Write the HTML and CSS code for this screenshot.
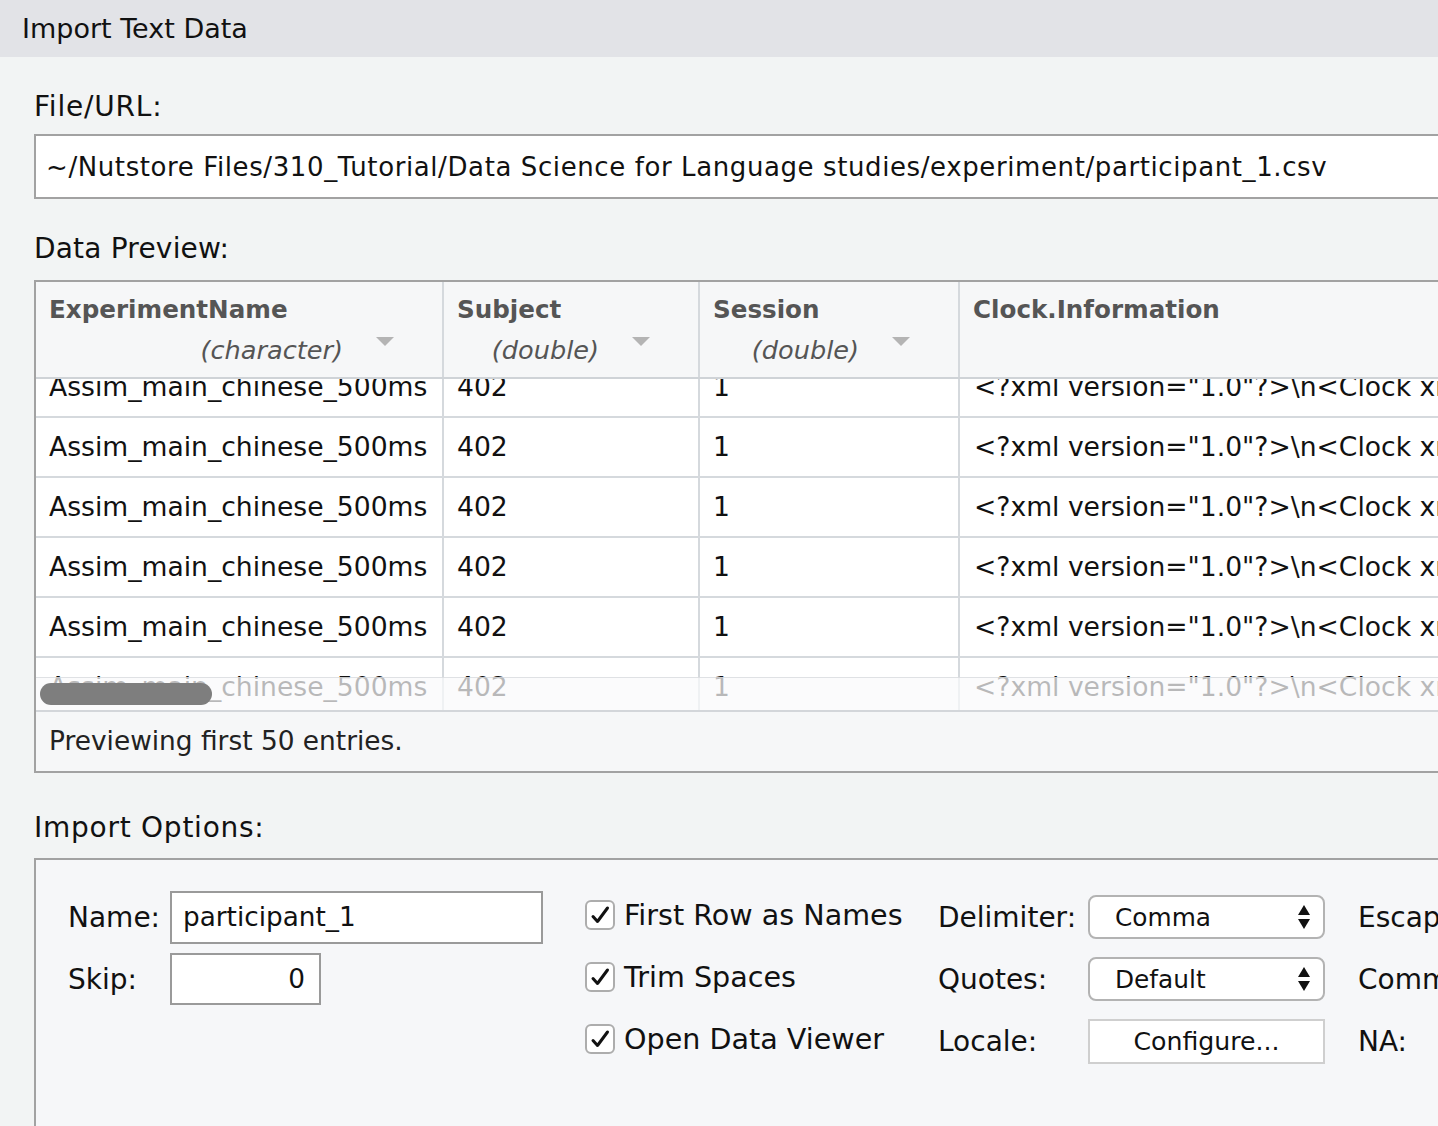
FILE: index.html
```html
<!DOCTYPE html>
<html>
<head>
<meta charset="utf-8">
<title>Import Text Data</title>
<link rel="stylesheet" href="styles.css">
</head>
<body>
<div class="page">
  <div class="titlebar">Import Text Data</div>
  <div class="content">
    <div class="section-label label-file">File/URL:</div>
    <div class="url-box">~/Nutstore Files/310_Tutorial/Data Science for Language studies/experiment/participant_1.csv</div>

    <div class="section-label label-preview">Data Preview:</div>
    <div class="preview">
      <div class="grid-head">
        <div class="hcell">
          <div class="hname">ExperimentName</div>
          <div class="htype"><span>(character)</span><svg class="tri" width="18" height="10" viewBox="0 0 18 10"><polygon points="0,0 18,0 9,9" fill="#b4b4b4"/></svg></div>
        </div>
        <div class="hcell">
          <div class="hname">Subject</div>
          <div class="htype"><span>(double)</span><svg class="tri" width="18" height="10" viewBox="0 0 18 10"><polygon points="0,0 18,0 9,9" fill="#b4b4b4"/></svg></div>
        </div>
        <div class="hcell">
          <div class="hname">Session</div>
          <div class="htype"><span>(double)</span><svg class="tri" width="18" height="10" viewBox="0 0 18 10"><polygon points="0,0 18,0 9,9" fill="#b4b4b4"/></svg></div>
        </div>
        <div class="hcell last">
          <div class="hname">Clock.Information</div>
        </div>
      </div>
      <div class="grid-body">
        <div class="rows">
          <div class="row"><div class="cell">Assim_main_chinese_500ms</div><div class="cell">402</div><div class="cell">1</div><div class="cell last">&lt;?xml version="1.0"?&gt;\n&lt;Clock xmlns:dt="urn:schemas-microsoft-com:datatypes"&gt;</div></div>
          <div class="row"><div class="cell">Assim_main_chinese_500ms</div><div class="cell">402</div><div class="cell">1</div><div class="cell last">&lt;?xml version="1.0"?&gt;\n&lt;Clock xmlns:dt="urn:schemas-microsoft-com:datatypes"&gt;</div></div>
          <div class="row"><div class="cell">Assim_main_chinese_500ms</div><div class="cell">402</div><div class="cell">1</div><div class="cell last">&lt;?xml version="1.0"?&gt;\n&lt;Clock xmlns:dt="urn:schemas-microsoft-com:datatypes"&gt;</div></div>
          <div class="row"><div class="cell">Assim_main_chinese_500ms</div><div class="cell">402</div><div class="cell">1</div><div class="cell last">&lt;?xml version="1.0"?&gt;\n&lt;Clock xmlns:dt="urn:schemas-microsoft-com:datatypes"&gt;</div></div>
          <div class="row"><div class="cell">Assim_main_chinese_500ms</div><div class="cell">402</div><div class="cell">1</div><div class="cell last">&lt;?xml version="1.0"?&gt;\n&lt;Clock xmlns:dt="urn:schemas-microsoft-com:datatypes"&gt;</div></div>
          <div class="row"><div class="cell">Assim_main_chinese_500ms</div><div class="cell">402</div><div class="cell">1</div><div class="cell last">&lt;?xml version="1.0"?&gt;\n&lt;Clock xmlns:dt="urn:schemas-microsoft-com:datatypes"&gt;</div></div>
        </div>
        <div class="hscroll"><div class="thumb"></div></div>
      </div>
      <div class="preview-foot">Previewing first 50 entries.</div>
    </div>

    <div class="section-label label-options">Import Options:</div>
    <div class="options">
      <div class="opt-grid">
        <div class="olabel">Name:</div>
        <div class="field"><div class="textbox name-box">participant_1</div></div>
        <div class="check-item"><span class="checkbox"><svg width="26" height="26" viewBox="0 0 26 26"><path d="M6 14.5 L10.5 19.5 L20.5 6" fill="none" stroke="#111" stroke-width="3" stroke-linecap="round" stroke-linejoin="round"/></svg></span><span class="check-text">First Row as Names</span></div>
        <div class="olabel">Delimiter:</div>
        <div class="field"><div class="select"><span>Comma</span><svg width="14" height="28" viewBox="0 0 14 28"><polygon points="1,12 7,2 13,12" fill="#111"/><polygon points="1,16 13,16 7,26" fill="#111"/></svg></div></div>
        <div class="olabel">Escape:</div>

        <div class="olabel">Skip:</div>
        <div class="field"><div class="textbox skip-box">0</div></div>
        <div class="check-item"><span class="checkbox"><svg width="26" height="26" viewBox="0 0 26 26"><path d="M6 14.5 L10.5 19.5 L20.5 6" fill="none" stroke="#111" stroke-width="3" stroke-linecap="round" stroke-linejoin="round"/></svg></span><span class="check-text">Trim Spaces</span></div>
        <div class="olabel">Quotes:</div>
        <div class="field"><div class="select"><span>Default</span><svg width="14" height="28" viewBox="0 0 14 28"><polygon points="1,12 7,2 13,12" fill="#111"/><polygon points="1,16 13,16 7,26" fill="#111"/></svg></div></div>
        <div class="olabel">Comment:</div>

        <div class="olabel"></div>
        <div class="field"></div>
        <div class="check-item"><span class="checkbox"><svg width="26" height="26" viewBox="0 0 26 26"><path d="M6 14.5 L10.5 19.5 L20.5 6" fill="none" stroke="#111" stroke-width="3" stroke-linecap="round" stroke-linejoin="round"/></svg></span><span class="check-text">Open Data Viewer</span></div>
        <div class="olabel">Locale:</div>
        <div class="field"><div class="button">Configure...</div></div>
        <div class="olabel">NA:</div>
      </div>
    </div>
  </div>
</div>
</body>
</html>
```

FILE: styles.css
```css
html, body {
  margin: 0;
  padding: 0;
}
body {
  width: 1438px;
  height: 1126px;
  overflow: hidden;
  background: #f2f4f4;
  font-family: "DejaVu Sans", "Liberation Sans", sans-serif;
  color: #111;
}
.page {
  width: 1438px;
  height: 1126px;
  overflow: hidden;
}
.titlebar {
  height: 57px;
  line-height: 58px;
  background: #e2e3e7;
  padding-left: 22px;
  font-size: 27px;
  color: #111;
  white-space: nowrap;
}
.content {
  padding-left: 34px;
  width: 1600px;
}
.section-label {
  font-size: 28px;
  line-height: 34px;
  height: 34px;
  white-space: nowrap;
}
.label-file { margin-top: 33px; letter-spacing: 0.8px; }
.url-box {
  margin-top: 10px;
  height: 61px;
  line-height: 63px;
  border: 2px solid #a2a2a2;
  background: #fff;
  padding-left: 10px;
  font-size: 26px;
  letter-spacing: 0.6px;
  white-space: nowrap;
  overflow: hidden;
}
.label-preview { margin-top: 33px; letter-spacing: 0.2px; }
.preview {
  margin-top: 14px;
  border: 2px solid #a2a2a2;
  background: #fff;
  width: 1500px;
}
.grid-head {
  display: grid;
  grid-template-columns: 408px 256px 260px 1fr;
  height: 95px;
  background: #f6f7f8;
  border-bottom: 2px solid #cfd3d7;
}
.hcell {
  border-right: 2px solid #d5d9dd;
  padding: 13px 0 0 13px;
  display: flex;
  flex-direction: column;
}
.hcell.last { border-right: none; }
.hname {
  font-weight: bold;
  font-size: 24.6px;
  line-height: 30px;
  color: #555;
  white-space: nowrap;
}
.htype {
  margin-top: 10px;
  display: flex;
  justify-content: flex-end;
  align-items: flex-start;
  gap: 33px;
  padding-right: 48px;
  font-style: italic;
  font-size: 25.6px;
  line-height: 30px;
  color: #555;
  white-space: nowrap;
}
.htype .tri { margin-top: 2px; }
.grid-body {
  position: relative;
  height: 331px;
  overflow: hidden;
}
.rows { margin-top: -21px; }
.row {
  display: grid;
  grid-template-columns: 408px 256px 260px 1fr;
  height: 60px;
}
.cell {
  border-right: 2px solid #d5d9dd;
  border-bottom: 2px solid #d5d9dd;
  padding-left: 13px;
  font-size: 26.6px;
  line-height: 58px;
  white-space: nowrap;
  overflow: hidden;
}
.cell.last { border-right: none; padding-left: 14px; }
.hscroll {
  position: absolute;
  left: 0;
  right: 0;
  bottom: 0;
  height: 32px;
  background: rgba(249, 250, 251, 0.72);
  border-top: 1px solid rgba(205, 208, 212, 0.6);
}
.thumb {
  position: absolute;
  left: 4px;
  top: 5px;
  width: 172px;
  height: 22px;
  border-radius: 11px;
  background: #7e7e7e;
}
.preview-foot {
  border-top: 2px solid #d3d6da;
  height: 59px;
  line-height: 58px;
  background: #f6f7f8;
  padding-left: 13px;
  font-size: 26.4px;
  color: #222;
  white-space: nowrap;
}
.label-options { margin-top: 38px; letter-spacing: 0.75px; }
.options {
  margin-top: 13px;
  border: 2px solid #a2a2a2;
  background: #f6f7f9;
  width: 1500px;
  height: 300px;
}
.opt-grid {
  display: grid;
  grid-template-columns: 102px 373px 395px 150px 270px auto;
  grid-auto-rows: 62px;
  align-items: center;
  padding: 26px 0 0 32px;
}
.olabel {
  font-size: 28px;
  line-height: 34px;
  margin-top: 2px;
  white-space: nowrap;
}
.field { display: flex; align-items: center; }
.textbox {
  box-sizing: border-box;
  border: 2px solid #9a9a9a;
  background: #fff;
  font-size: 26.3px;
  white-space: nowrap;
}
.name-box {
  width: 373px;
  height: 53px;
  line-height: 49px;
  padding-left: 11px;
}
.skip-box {
  width: 151px;
  height: 52px;
  line-height: 48px;
  text-align: right;
  padding-right: 14px;
}
.check-item {
  display: flex;
  align-items: center;
  gap: 9px;
  padding-left: 42px;
  margin-top: -4px;
}
.checkbox {
  box-sizing: border-box;
  width: 30px;
  height: 30px;
  border: 2px solid #adadad;
  border-radius: 6px;
  background: #fff;
  display: flex;
  align-items: center;
  justify-content: center;
}
.check-text {
  font-size: 28.6px;
  line-height: 34px;
  white-space: nowrap;
}
.select {
  box-sizing: border-box;
  width: 237px;
  height: 44px;
  border: 2px solid #b3b3b3;
  border-radius: 8px;
  background: #fff;
  display: flex;
  align-items: center;
  justify-content: space-between;
  padding: 0 12px 0 25px;
  font-size: 24.8px;
  white-space: nowrap;
}
.button {
  box-sizing: border-box;
  width: 237px;
  height: 45px;
  line-height: 41px;
  border: 2px solid #cfcfcf;
  background: #fff;
  text-align: center;
  font-size: 25.2px;
  white-space: nowrap;
}
```
